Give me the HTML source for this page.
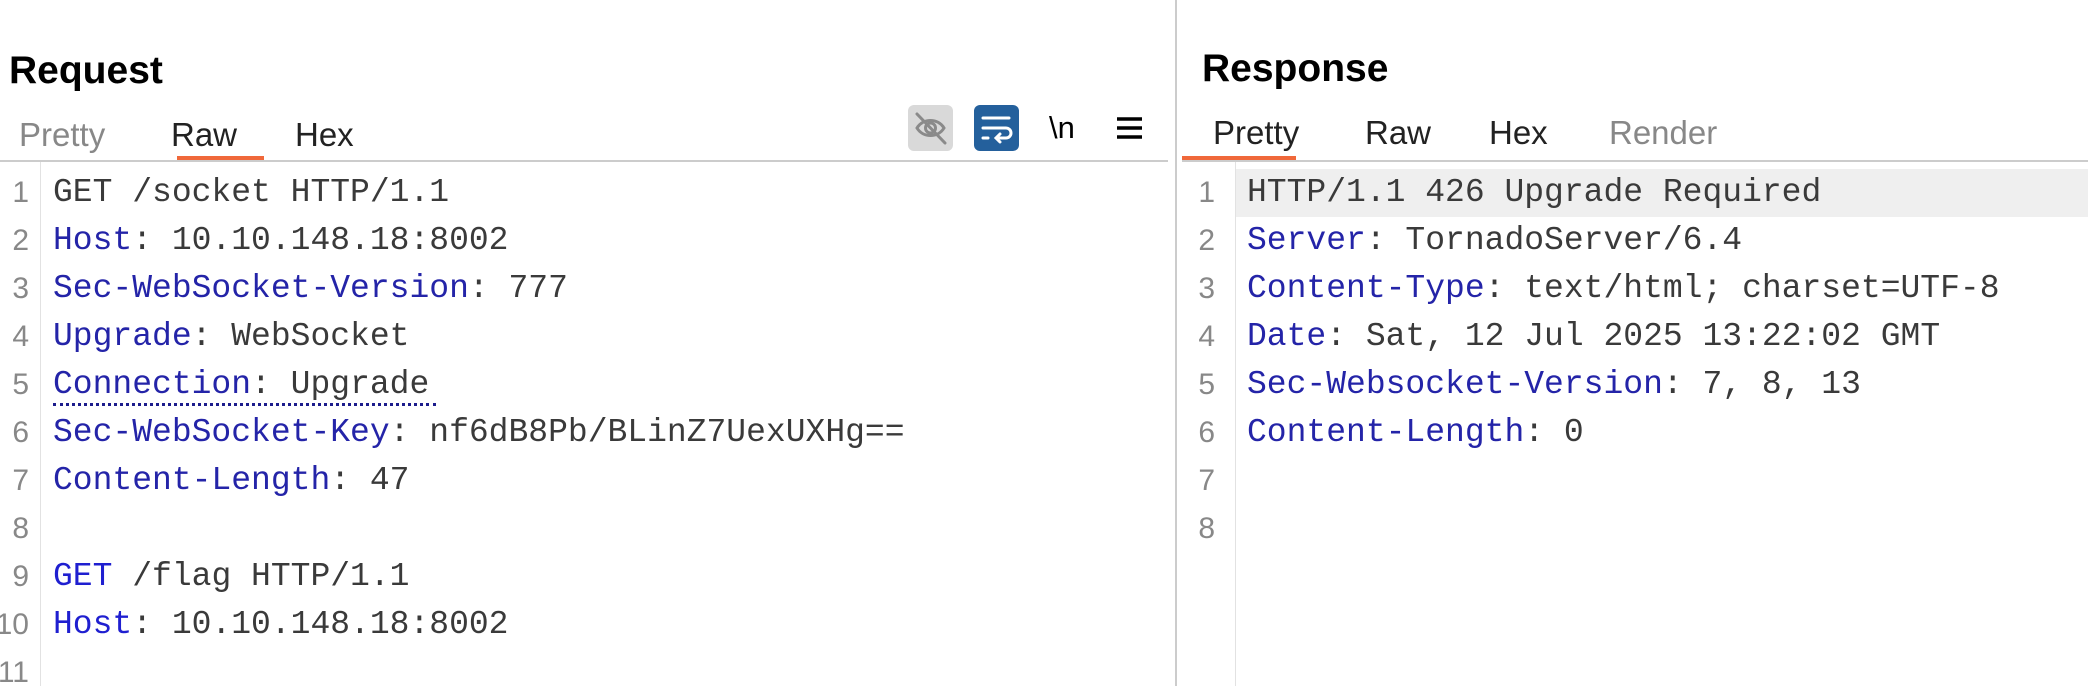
<!DOCTYPE html>
<html><head><meta charset="utf-8"><style>
html,body{margin:0;padding:0;background:#fff;width:2088px;height:686px;overflow:hidden;position:relative;font-family:"Liberation Sans",sans-serif}
.a{position:absolute;white-space:pre}
svg{display:block}
.title{font-weight:bold;font-size:39px;color:#000}
.tab{font-size:33px;color:#222}
.code{font-family:"Liberation Mono",monospace;font-size:33px;color:#3a3a3a;line-height:48px;height:48px}
.k{color:#2424a8}
.num{font-size:30px;color:#888;text-align:right;width:40px;line-height:48px}
</style></head><body>
<div class="a" style="left:1175px;top:0;width:2px;height:686px;background:#ccc"></div>
<div class="a" style="left:0;top:160px;width:1168px;height:2px;background:#ccc"></div>
<div class="a" style="left:1182px;top:160px;width:906px;height:2px;background:#ccc"></div>
<div class="a" style="left:40px;top:162px;width:1px;height:524px;background:#e2e2e2"></div>
<div class="a" style="left:1235px;top:162px;width:1px;height:524px;background:#e2e2e2"></div>
<div class="a" style="left:1236px;top:169px;width:852px;height:48px;background:#efefef"></div>

<div class="a title" style="left:9px;top:49px">Request</div>
<div class="a title" style="left:1202px;top:47px">Response</div>

<div class="a tab" style="left:19px;top:116px;color:#888">Pretty</div>
<div class="a tab" style="left:171px;top:116px">Raw</div>
<div class="a tab" style="left:295px;top:116px">Hex</div>
<div class="a" style="left:177px;top:156px;width:87px;height:4px;background:#f0683a"></div>

<div class="a tab" style="left:1213px;top:114px">Pretty</div>
<div class="a tab" style="left:1365px;top:114px">Raw</div>
<div class="a tab" style="left:1489px;top:114px">Hex</div>
<div class="a tab" style="left:1609px;top:114px;color:#888">Render</div>
<div class="a" style="left:1182px;top:156px;width:114px;height:4px;background:#f0683a"></div>

<div class="a" style="left:908px;top:105px;width:45px;height:46px;background:#d9d9d9;border-radius:6px"><svg width="45" height="46" viewBox="0 0 45 46"><g fill="none" stroke="#8a8a8a" stroke-width="3" stroke-linecap="round"><path d="M9 23 C15 13 30 13 36 23 C30 33 15 33 9 23Z"/><circle cx="22.5" cy="23" r="5"/><path d="M9 9 L37 38"/></g></svg></div>
<div class="a" style="left:974px;top:105px;width:45px;height:46px;background:#24609c;border-radius:6px"><svg width="45" height="46" viewBox="0 0 45 46"><g fill="none" stroke="#fff" stroke-width="3" stroke-linecap="round"><path d="M9 13 H35"/><path d="M9 23 H32 A5 5 0 0 1 32 33 H23"/><path d="M26 29 L22 33 L26 37"/><path d="M9 33 H14"/></g></svg></div>
<div class="a" style="left:1049px;top:110px;font-size:31px;color:#000">\n</div>
<svg class="a" style="left:1116px;top:116px" width="27" height="24" viewBox="0 0 27 24"><g stroke="#000" stroke-width="3.5"><path d="M1 3H26M1 12H26M1 21H26"/></g></svg>

<div class="a num" style="left:-11px;top:169px">1</div><div class="a code" style="left:53px;top:169px">GET /socket HTTP/1.1</div>
<div class="a num" style="left:-11px;top:217px">2</div><div class="a code" style="left:53px;top:217px"><span class="k">Host</span>: 10.10.148.18:8002</div>
<div class="a num" style="left:-11px;top:265px">3</div><div class="a code" style="left:53px;top:265px"><span class="k">Sec-WebSocket-Version</span>: 777</div>
<div class="a num" style="left:-11px;top:313px">4</div><div class="a code" style="left:53px;top:313px"><span class="k">Upgrade</span>: WebSocket</div>
<div class="a num" style="left:-11px;top:361px">5</div><div class="a code" style="left:53px;top:361px"><span class="k">Connection</span>: Upgrade</div>
<div class="a" style="left:53px;top:403px;width:383px;border-top:3px dotted #1c1c8c"></div>
<div class="a num" style="left:-11px;top:409px">6</div><div class="a code" style="left:53px;top:409px"><span class="k">Sec-WebSocket-Key</span>: nf6dB8Pb/BLinZ7UexUXHg==</div>
<div class="a num" style="left:-11px;top:457px">7</div><div class="a code" style="left:53px;top:457px"><span class="k">Content-Length</span>: 47</div>
<div class="a num" style="left:-11px;top:505px">8</div>
<div class="a num" style="left:-11px;top:553px">9</div><div class="a code" style="left:53px;top:553px"><span class="k" style="color:#1f1fd0">GET</span> /flag HTTP/1.1</div>
<div class="a num" style="left:-11px;top:601px">10</div><div class="a code" style="left:53px;top:601px"><span class="k" style="color:#1f1fd0">Host</span>: 10.10.148.18:8002</div>
<div class="a num" style="left:-11px;top:649px">11</div>

<div class="a num" style="left:1175px;top:169px">1</div><div class="a code" style="left:1247px;top:169px">HTTP/1.1 426 Upgrade Required</div>
<div class="a num" style="left:1175px;top:217px">2</div><div class="a code" style="left:1247px;top:217px"><span class="k">Server</span>: TornadoServer/6.4</div>
<div class="a num" style="left:1175px;top:265px">3</div><div class="a code" style="left:1247px;top:265px"><span class="k">Content-Type</span>: text/html; charset=UTF-8</div>
<div class="a num" style="left:1175px;top:313px">4</div><div class="a code" style="left:1247px;top:313px"><span class="k">Date</span>: Sat, 12 Jul 2025 13:22:02 GMT</div>
<div class="a num" style="left:1175px;top:361px">5</div><div class="a code" style="left:1247px;top:361px"><span class="k">Sec-Websocket-Version</span>: 7, 8, 13</div>
<div class="a num" style="left:1175px;top:409px">6</div><div class="a code" style="left:1247px;top:409px"><span class="k">Content-Length</span>: 0</div>
<div class="a num" style="left:1175px;top:457px">7</div>
<div class="a num" style="left:1175px;top:505px">8</div>
</body></html>
